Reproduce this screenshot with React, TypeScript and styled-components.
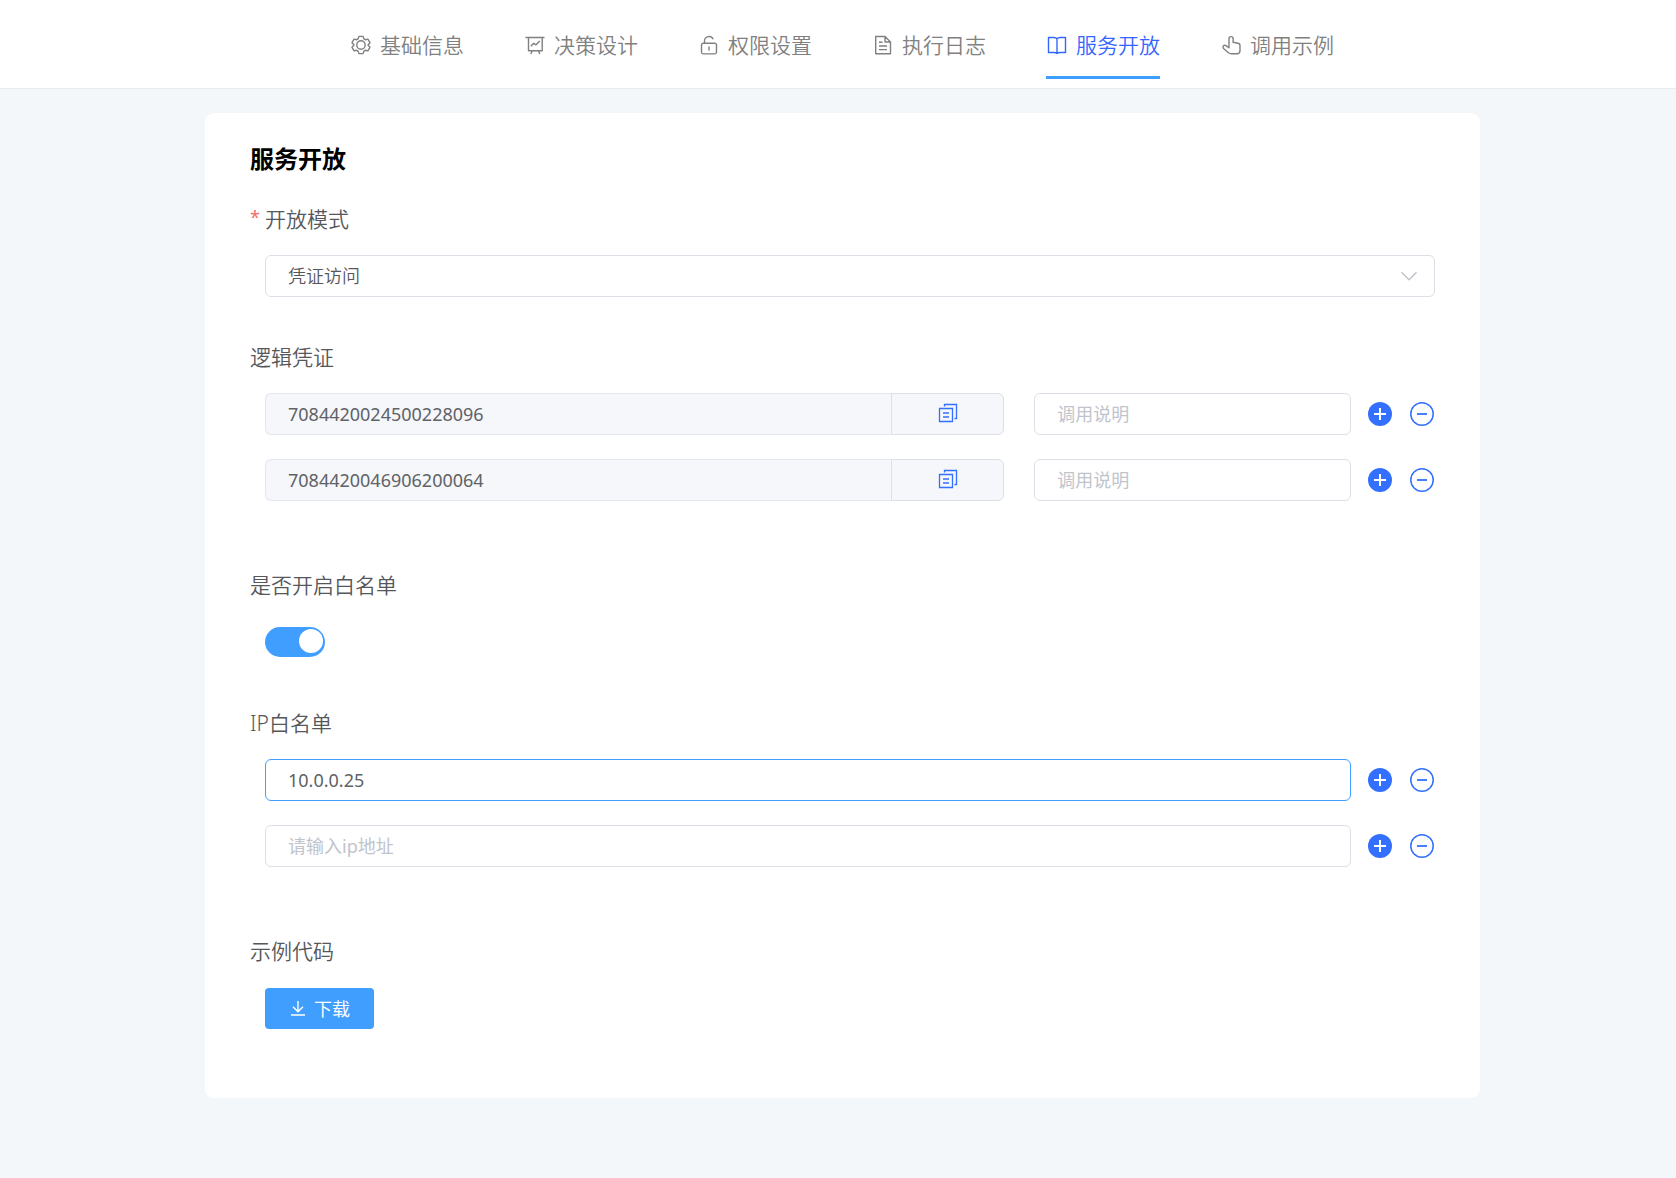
import React, { useState } from "react";
import styled, { createGlobalStyle } from "styled-components";

const GlobalStyle = createGlobalStyle`
  *, *::before, *::after { box-sizing: border-box; }
  body {
    margin: 0;
    background: #f3f7fa;
    color: #606266;
    font-family: "Noto Sans", "Noto Sans CJK SC", sans-serif;
    font-size: 18px;
    font-weight: 350;
  }
  button, input, select { font: inherit; color: inherit; }
`;

const Header = styled.header`
  background: #fff;
  border-bottom: 1px solid #e8ebef;
  padding: 11px 0 9px 8px;
`;

const Nav = styled.nav`
  display: flex;
  justify-content: center;
  gap: 60px;
`;

const Tab = styled.a<{ $active?: boolean }>`
  display: flex;
  align-items: center;
  gap: 8px;
  height: 68px;
  border-top: 3px solid transparent;
  border-bottom: 3px solid ${(p) => (p.$active ? "#409eff" : "transparent")};
  color: ${(p) => (p.$active ? "#3366ff" : "#808080")};
  font-size: 21px;
  line-height: 30px;
  text-decoration: none;
  white-space: nowrap;
`;

const Icon = styled.svg<{ $size: number }>`
  flex: none;
  display: block;
  width: ${(p) => p.$size}px;
  height: ${(p) => p.$size}px;
  fill: none;
  stroke: currentColor;
`;

const Main = styled.main`
  padding: 24px 0 24px 9px;
`;

const Card = styled.form`
  max-width: 1275px;
  margin: 0 auto;
  padding: 28px 45px 29px;
  background: #fff;
  border-radius: 9px;
`;

const Title = styled.h1`
  margin: 0 0 22px;
  color: #000;
  font-size: 24px;
  line-height: 36px;
  font-weight: 700;
`;

const Section = styled.section`
  margin-bottom: 40px;
`;

const Label = styled.label`
  display: flex;
  width: fit-content;
  margin-bottom: 16px;
  color: #55575b;
  font-size: 21px;
  line-height: 40px;
`;

const Required = styled.span`
  width: 15px;
  color: #f56c6c;
  font-size: 18px;
  font-weight: 400;
  line-height: 36px;
`;

const Content = styled.div`
  min-height: 42px;
  padding-left: 15px;
  display: flex;
  align-items: center;
`;

const SelectBox = styled.div`
  flex: 1;
  display: grid;
  align-items: center;

  > * { grid-area: 1 / 1; }
  > svg {
    justify-self: end;
    margin-right: 17px;
    color: #c0c4cc;
    pointer-events: none;
  }
`;

const Select = styled.select`
  appearance: none;
  width: 100%;
  height: 42px;
  padding: 0 48px 0 22px;
  background: #fff;
  border: 1px solid #dcdfe6;
  border-radius: 6px;
  outline: none;
  color: #55575b;
`;

const Rows = styled.div`
  padding: 0 1px 24px 15px;
  display: grid;
  gap: 24px;
`;

const Row = styled.div`
  display: flex;
  align-items: center;
`;

const Fields = styled.div`
  flex: 1;
  display: grid;
  grid-template-columns: 7fr 3fr;
  gap: 30px;
`;

const Input = styled.input<{ $active?: boolean }>`
  flex: 1;
  min-width: 0;
  height: 42px;
  padding: 0 22px;
  background: #fff;
  border: 1px solid ${(p) => (p.$active ? "#409eff" : "#dcdfe6")};
  border-radius: 6px;
  outline: none;
  font-weight: 400;

  &::placeholder { color: #c0c4cc; opacity: 1; }
`;

const Group = styled.div`
  display: flex;
  min-width: 0;
`;

const LockedInput = styled(Input)`
  background: #f5f7fb;
  border-color: #e4e7ed;
  border-right: 0;
  border-radius: 6px 0 0 6px;
`;

const CopyButton = styled.button`
  width: 113px;
  height: 42px;
  padding: 0 0 2px 1px;
  display: grid;
  place-items: center;
  background: #f5f7fb;
  border: 1px solid #dcdfe6;
  border-radius: 0 6px 6px 0;
  color: #3370ff;
  cursor: pointer;
`;

const Actions = styled.div`
  display: flex;
  gap: 18px;
  margin-left: 17px;
`;

const RoundButton = styled.button`
  padding: 0;
  background: none;
  border: 0;
  color: #3370ff;
  cursor: pointer;
`;

const Switch = styled.input`
  appearance: none;
  display: flex;
  width: 60px;
  height: 30px;
  margin: 0;
  padding: 2px;
  border-radius: 15px;
  background: #dcdfe6;
  cursor: pointer;

  &::before {
    content: "";
    width: 24px;
    height: 24px;
    border-radius: 50%;
    background: #fff;
  }
  &:checked {
    justify-content: flex-end;
    background: #409eff;
  }
`;

const DownloadButton = styled.button`
  display: flex;
  align-items: center;
  gap: 7px;
  height: 41px;
  padding: 0 24px;
  background: #409eff;
  border: 0;
  border-radius: 4px;
  color: #fff;
  font-weight: 400;
  cursor: pointer;
`;

const TABS = [
  {
    name: "基础信息",
    icon: (
      <>
        <path d="M8.9 2.4h4.2l.8 2.5 1.3.8 2.7-.6 2.1 3.6-1.9 2v.6l1.9 2-2.1 3.6-2.7-.6-1.3.8-.8 2.5H8.9l-.8-2.5-1.3-.8-2.7.6L2 13.3l1.9-2v-.6L2 8.7l2.1-3.6 2.7.6 1.3-.8z" />
        <circle cx="11" cy="11" r="4.2" />
      </>
    ),
  },
  {
    name: "决策设计",
    icon: <path d="M1.5 3.5h19M4.5 3.5v13.3h13.7V3.5M8.3 17l-1.6 3M14.4 17l1.6 3M6.8 12.3l2.9-3 2.3 1.5 3.7-3.8" />,
  },
  {
    name: "权限设置",
    icon: <path d="M5.3 9.3h11.4a1.8 1.8 0 0 1 1.8 1.8v7a1.8 1.8 0 0 1-1.8 1.8H5.3a1.8 1.8 0 0 1-1.8-1.8v-7a1.8 1.8 0 0 1 1.8-1.8zM6.5 9.3V7a4.5 4.5 0 0 1 8.6-1.8M11 12.5v4" />,
  },
  {
    name: "执行日志",
    icon: <path d="M13 2.5H3.7v17.2h14.8V8zM13 2.5V8h5.5M7 8.3h3.5M7 12h8M7 15.6h8" />,
  },
  {
    name: "服务开放",
    icon: <path d="M2.5 3.5h5.3q2.2 0 3.2 1.3 1-1.3 3.2-1.3h5.3v15h-5.3q-2.2 0-3.2.9-1-.9-3.2-.9H2.5zM11 4.8v14.5" />,
  },
  {
    name: "调用示例",
    icon: <path d="M9 13V4.7a2 2 0 0 1 4.1 0v3.5l4.9 1.1a2.4 2.4 0 0 1 2 2.4v5a3 3 0 0 1-3 3h-5.5a5 5 0 0 1-3-1l-5-4.2c-1.6-2 .6-4.2 2.5-2.9L9 13.8z" />,
  },
];

function CopyIcon() {
  return (
    <Icon $size={20} viewBox="0 0 20 20" strokeWidth="1.3">
      <path d="M1.5 5.5h13v13h-13zM6.5 3.5v-2h12v14h-2M5 10h6M5 14h6" />
    </Icon>
  );
}

function RowActions() {
  return (
    <Actions>
      <RoundButton type="button" aria-label="添加">
        <Icon $size={24} viewBox="0 0 24 24">
          <circle cx="12" cy="12" r="12" fill="currentColor" stroke="none" />
          <path d="M6 12h12M12 6v12" stroke="#fff" strokeWidth="2" />
        </Icon>
      </RoundButton>
      <RoundButton type="button" aria-label="删除">
        <Icon $size={24} viewBox="0 0 24 24" strokeWidth="1.5">
          <circle cx="12" cy="12" r="11.2" />
          <path d="M7 12h10" strokeWidth="1.8" />
        </Icon>
      </RoundButton>
    </Actions>
  );
}

export default function App() {
  const [whitelist, setWhitelist] = useState(true);
  const [notes, setNotes] = useState(["", ""]);
  const [ips, setIps] = useState(["10.0.0.25", ""]);
  const replace = (list: string[], at: number, value: string) =>
    list.map((item, i) => (i === at ? value : item));

  return (
    <>
      <GlobalStyle />
      <Header>
        <Nav>
          {TABS.map((tab) => (
            <Tab key={tab.name} href="#" $active={tab.name === "服务开放"}>
              <Icon $size={22} viewBox="0 0 22 22" strokeWidth="1.4" strokeLinejoin="round">
                {tab.icon}
              </Icon>
              {tab.name}
            </Tab>
          ))}
        </Nav>
      </Header>
      <Main>
        <Card>
          <Title>服务开放</Title>
          <Section>
            <Label htmlFor="mode">
              <Required>*</Required>
              开放模式
            </Label>
            <Content>
              <SelectBox>
                <Select id="mode">
                  <option>凭证访问</option>
                </Select>
                <Icon $size={18} viewBox="0 0 18 18" strokeWidth="1.5">
                  <path d="M1.5 5.2L9 12.8l7.5-7.6" />
                </Icon>
              </SelectBox>
            </Content>
          </Section>
          <Section>
            <Label htmlFor="credential-0">逻辑凭证</Label>
            <Rows>
              {["7084420024500228096", "7084420046906200064"].map((id, i) => (
                <Row key={id}>
                  <Fields>
                    <Group>
                      <LockedInput id={`credential-${i}`} aria-label="逻辑凭证" value={id} readOnly />
                      <CopyButton type="button" aria-label="复制">
                        <CopyIcon />
                      </CopyButton>
                    </Group>
                    <Input
                      aria-label="调用说明"
                      placeholder="调用说明"
                      value={notes[i]}
                      onChange={(e) => setNotes(replace(notes, i, e.target.value))}
                    />
                  </Fields>
                  <RowActions />
                </Row>
              ))}
            </Rows>
          </Section>
          <Section>
            <Label htmlFor="whitelist">是否开启白名单</Label>
            <Content>
              <Switch
                id="whitelist"
                type="checkbox"
                role="switch"
                checked={whitelist}
                onChange={(e) => setWhitelist(e.target.checked)}
              />
            </Content>
          </Section>
          <Section>
            <Label htmlFor="ip-0">IP白名单</Label>
            <Rows>
              {ips.map((ip, i) => (
                <Row key={i}>
                  <Input
                    id={`ip-${i}`}
                    aria-label="IP白名单"
                    placeholder="请输入ip地址"
                    $active={i === 0}
                    value={ip}
                    onChange={(e) => setIps(replace(ips, i, e.target.value))}
                  />
                  <RowActions />
                </Row>
              ))}
            </Rows>
          </Section>
          <Section>
            <Label htmlFor="download">示例代码</Label>
            <Content>
              <DownloadButton id="download" type="button">
                <Icon $size={18} viewBox="0 0 18 18" strokeWidth="1.4">
                  <path d="M2 16h14M9 2v10.5M4 7.8l5 5 5-5" />
                </Icon>
                下载
              </DownloadButton>
            </Content>
          </Section>
        </Card>
      </Main>
    </>
  );
}
